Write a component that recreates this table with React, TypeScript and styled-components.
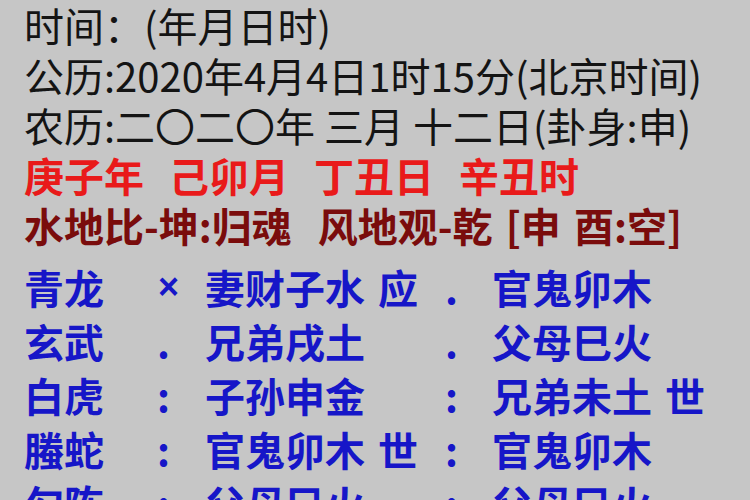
import React from "react";
import styled, { createGlobalStyle } from "styled-components";

const Global = createGlobalStyle`
  html, body { margin: 0; padding: 0; background: #c6c6c6; }
  body { width: 750px; height: 500px; overflow: hidden; }
`;

const Page = styled.div`
  width: 750px;
  height: 500px;
  overflow: hidden;
  background: #c6c6c6;
  padding: 0 0 0 24px;
  box-sizing: border-box;
  font-family: "Noto Sans CJK SC", "Noto Sans", sans-serif;
  font-size: 40px;
  white-space: pre;
`;

const Line = styled.div<{ $tone?: "plain" | "red" | "maroon" }>`
  height: 50px;
  line-height: 50px;
  color: ${(p) => (p.$tone === "red" ? "#e91a1a" : p.$tone === "maroon" ? "#7a0c0c" : "#141414")};
  font-weight: ${(p) => (p.$tone && p.$tone !== "plain" ? 700 : 400)};
`;

const Groups = styled.div<{ $gap: number }>`
  display: flex;
  gap: ${(p) => p.$gap}px;
`;

const Spaced = styled.span`
  word-spacing: 4px;
`;

const Table = styled.div`
  margin-top: 10px;
  display: grid;
  grid-template-columns: 133px 48px 240px 47px auto;
  grid-auto-rows: 54px;
  align-items: center;
  color: #1616c8;
  font-weight: 700;
  line-height: 54px;
`;

const Cell = styled.span`
  word-spacing: 4px;
`;

const Mark = styled.span<{ $cross?: boolean }>`
  font-family: ${(p) => (p.$cross ? '"Liberation Sans", sans-serif' : "inherit")};
  font-size: ${(p) => (p.$cross ? "36px" : "40px")};
  padding-left: ${(p) => (p.$cross ? "1px" : "0")};
`;

const rows: [string, string, string, string, string][] = [
  ["青龙", "×", "妻财子水 应", ".", "官鬼卯木"],
  ["玄武", ".", "兄弟戌土", ".", "父母巳火"],
  ["白虎", ":", "子孙申金", ":", "兄弟未土 世"],
  ["螣蛇", ":", "官鬼卯木 世", ":", "官鬼卯木"],
  ["勾陈", ":", "父母巳火", ":", "父母巳火"],
];

export default function App() {
  return (
    <>
      <Global />
      <Page>
        <Line>时间：(年月日时)</Line>
        <Line>公历:2020年4月4日1时15分(北京时间)</Line>
        <Line>农历:二〇二〇年 三月 十二日(卦身:申)</Line>
        <Line $tone="red">
          <Groups $gap={25}>
            <span>庚子年</span>
            <span>己卯月</span>
            <span>丁丑日</span>
            <span>辛丑时</span>
          </Groups>
        </Line>
        <Line $tone="maroon">
          <Groups $gap={26}>
            <span>水地比-坤:归魂</span>
            <Spaced>风地观-乾 [申 酉:空]</Spaced>
          </Groups>
        </Line>
        <Table>
          {rows.map((r, i) => (
            <React.Fragment key={i}>
              <Cell>{r[0]}</Cell>
              <Mark $cross={r[1] === "×"}>{r[1]}</Mark>
              <Cell>{r[2]}</Cell>
              <Mark>{r[3]}</Mark>
              <Cell>{r[4]}</Cell>
            </React.Fragment>
          ))}
        </Table>
      </Page>
    </>
  );
}
